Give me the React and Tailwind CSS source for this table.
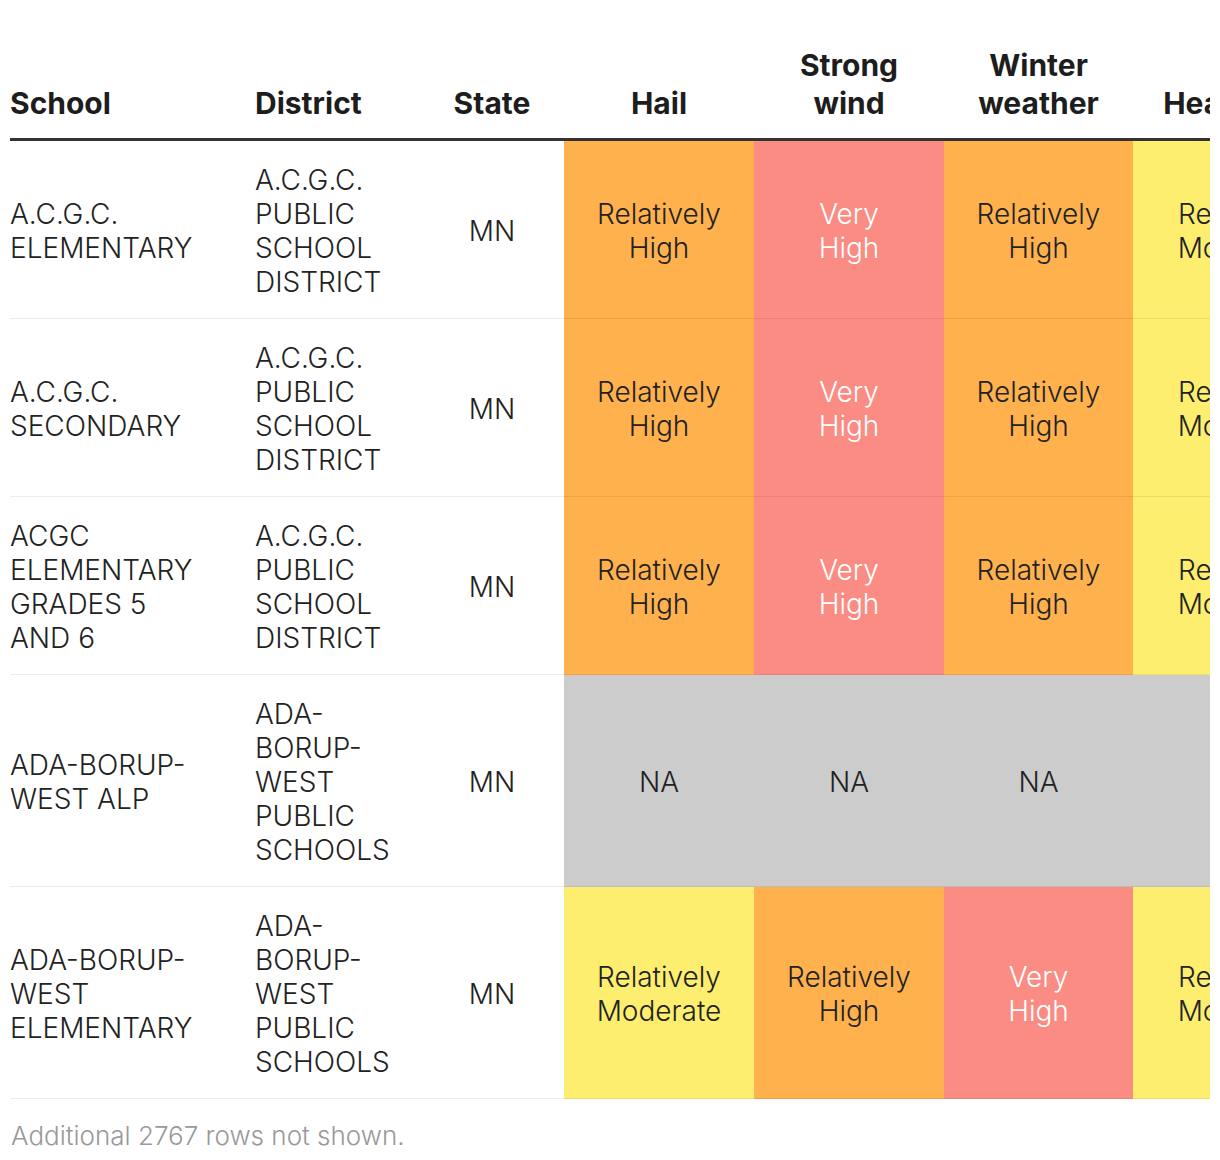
const cellColors = {
  "Relatively High": "bg-[#ffb14e] text-[#222]",
  "Very High": "bg-[#fa8c84] text-white",
  "Relatively Moderate": "bg-[#fdee6f] text-[#222]",
  NA: "bg-[#cccccc] text-[#222]",
};

const rows = [
  {
    school: "A.C.G.C. ELEMENTARY",
    district: "A.C.G.C. PUBLIC SCHOOL DISTRICT",
    state: "MN",
    risks: ["Relatively High", "Very High", "Relatively High", "Relatively Moderate"],
  },
  {
    school: "A.C.G.C. SECONDARY",
    district: "A.C.G.C. PUBLIC SCHOOL DISTRICT",
    state: "MN",
    risks: ["Relatively High", "Very High", "Relatively High", "Relatively Moderate"],
  },
  {
    school: "ACGC ELEMENTARY GRADES 5 AND 6",
    district: "A.C.G.C. PUBLIC SCHOOL DISTRICT",
    state: "MN",
    risks: ["Relatively High", "Very High", "Relatively High", "Relatively Moderate"],
  },
  {
    school: "ADA-BORUP-WEST ALP",
    district: "ADA-BORUP-WEST PUBLIC SCHOOLS",
    state: "MN",
    risks: ["NA", "NA", "NA", "NA"],
  },
  {
    school: "ADA-BORUP-WEST ELEMENTARY",
    district: "ADA-BORUP-WEST PUBLIC SCHOOLS",
    state: "MN",
    risks: ["Relatively Moderate", "Relatively High", "Very High", "Relatively Moderate"],
  },
];

const hazards = [["Hail"], ["Strong", "wind"], ["Winter", "weather"], ["Heat wave"]];

const App = () => {
  return (
    <div className="w-[1220px] bg-white px-[10px] pt-[36px] font-[Inter,sans-serif]">
      <div className="overflow-hidden">
        <table className="w-[1337px] table-fixed border-collapse">
          <colgroup>
            <col className="w-[235px]" />
            <col className="w-[175px]" />
            <col className="w-[144px]" />
            <col className="w-[190px]" />
            <col className="w-[190px]" />
            <col className="w-[189px]" />
            <col className="w-[214px]" />
          </colgroup>
          <thead>
            <tr className="text-[30px] font-bold leading-[38px] text-[#1d1d1d]">
              <th className="border-b-[3px] border-[#333] pt-[10px] pb-[16px] text-left align-bottom">
                School
              </th>
              <th className="border-b-[3px] border-[#333] pt-[10px] pb-[16px] pl-[10px] text-left align-bottom">
                District
              </th>
              <th className="border-b-[3px] border-[#333] pt-[10px] pb-[16px] text-center align-bottom">
                State
              </th>
              {hazards.map((lines, i) => (
                <th
                  key={i}
                  className="whitespace-nowrap border-b-[3px] border-[#333] pt-[10px] pb-[16px] text-center align-bottom"
                >
                  {lines.map((l) => (
                    <div key={l}>{l}</div>
                  ))}
                </th>
              ))}
            </tr>
          </thead>
          <tbody className="text-[28px] font-light leading-[34px] text-[#222]">
            {rows.map((row, index) => (
              <tr key={index}>
                <td className="border-b border-[rgba(0,0,0,0.075)] pt-[22px] pb-[19px] pr-[40px] align-middle">
                  {row.school}
                </td>
                <td className="border-b border-[rgba(0,0,0,0.075)] pt-[22px] pb-[19px] pl-[10px] pr-[20px] align-middle">
                  {row.district}
                </td>
                <td className="border-b border-[rgba(0,0,0,0.075)] pt-[22px] pb-[19px] text-center align-middle">
                  {row.state}
                </td>
                {row.risks.map((risk, i) => (
                  <td
                    key={i}
                    className={`border-b border-[rgba(0,0,0,0.075)] pt-[22px] pb-[19px] text-center align-middle whitespace-nowrap ${cellColors[risk]}`}
                  >
                    {risk.split(" ").map((w) => (
                      <div key={w}>{w}</div>
                    ))}
                  </td>
                ))}
              </tr>
            ))}
          </tbody>
        </table>
      </div>
      <p className="mt-[20px] pl-px text-[26px] font-light leading-[34px] text-[#999]">
        Additional 2767 rows not shown.
      </p>
    </div>
  );
};

export default App;
